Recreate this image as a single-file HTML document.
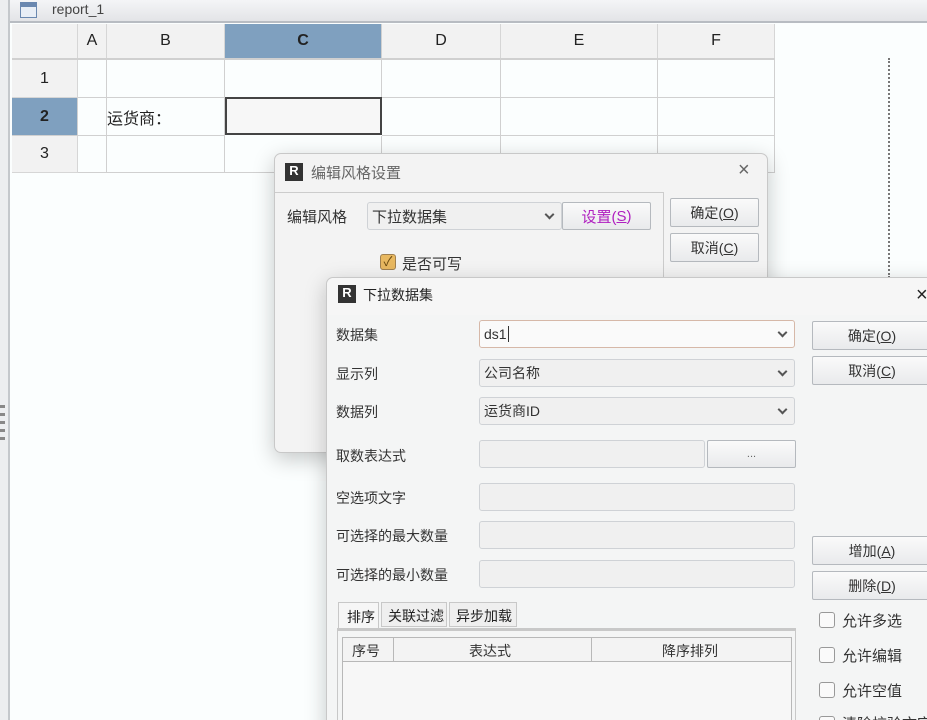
<!DOCTYPE html>
<html style="overflow:hidden;width:927px;height:720px"><head><meta charset="utf-8"><style>
*{box-sizing:border-box;margin:0;padding:0}
body{width:927px;height:720px;overflow:hidden;background:#fbfefe;font-family:"Liberation Sans","Noto Sans CJK SC",sans-serif;font-size:14px;color:#222;position:relative;white-space:nowrap}
.a{position:absolute}
.top{left:0;top:0;width:927px;height:23px;background:linear-gradient(#f4f5f7,#e3e4e7);border-bottom:2px solid #b8bcc2}
.cell{position:absolute;border-right:1px solid #d0d0d0;border-bottom:1px solid #d0d0d0;display:flex;align-items:center;justify-content:center;font-size:16px}
.hd{background:#f2f2f2;border-color:#d6d6d6}
.dlg{background:#f3f3f3;border:1px solid #c8c8c8;border-radius:7px;box-shadow:0 6px 22px rgba(0,0,0,.22)}
.btn{position:absolute;border:1px solid #b5b9be;border-radius:2px;background:linear-gradient(#fafafa,#e9eaec);display:flex;align-items:center;justify-content:center;font-size:14px;color:#333}
.in{position:absolute;border:1px solid #cfd2d6;border-radius:3px;background:#f0f0f0;font-size:14px;padding-left:4px;display:flex;align-items:center;color:#333}
.chev{position:absolute;right:8px;top:8px;width:7px;height:7px;border-right:2px solid #555;border-bottom:2px solid #555;transform:rotate(45deg)}
.lbl{position:absolute;font-size:14px;color:#333}
.cb{position:absolute;width:16px;height:16px;border:1px solid #999;border-radius:3px;background:#fafafa}
u{text-decoration:underline}
.ricon{position:absolute;width:18px;height:18px;background:#333;color:#fff;font:bold 13px/16px "Liberation Sans",sans-serif;text-align:center}
</style></head><body>
<div class="a top"></div>
<div class="a" style="left:0;top:0;width:10px;height:720px;background:#eceef0;border-right:2px solid #c4c8cc"></div>
<div class="a" style="left:0;top:405px;width:5px;height:40px;background:repeating-linear-gradient(#888 0 3px,transparent 3px 8px)"></div>
<div class="a" style="left:20px;top:2px;width:17px;height:16px;background:#e8eef6;border:1px solid #6a88b0"><div style="height:4px;background:#6a88b0"></div></div>
<div class="a" style="left:52px;top:1px;font-size:14px;color:#444">report_1</div>

<div class="cell hd" style="left:12px;top:24px;width:66px;height:35px"></div>
<div class="cell hd" style="left:78px;top:24px;width:29px;height:35px">A</div>
<div class="cell hd" style="left:107px;top:24px;width:118px;height:35px">B</div>
<div class="cell" style="left:225px;top:24px;width:157px;height:35px;background:#7fa0bf;font-weight:bold">C</div>
<div class="cell hd" style="left:382px;top:24px;width:119px;height:35px">D</div>
<div class="cell hd" style="left:501px;top:24px;width:157px;height:35px">E</div>
<div class="cell hd" style="left:658px;top:24px;width:117px;height:35px">F</div>
<div class="a" style="left:12px;top:58px;width:763px;height:2px;background:#d0d0d0"></div>

<div class="cell hd" style="left:12px;top:60px;width:66px;height:38px">1</div>
<div class="cell" style="left:12px;top:98px;width:66px;height:38px;background:#7fa0bf;font-weight:bold">2</div>
<div class="cell hd" style="left:12px;top:136px;width:66px;height:37px">3</div>
<div class="cell" style="left:78px;top:60px;width:29px;height:38px"></div><div class="cell" style="left:107px;top:60px;width:118px;height:38px"></div><div class="cell" style="left:225px;top:60px;width:157px;height:38px"></div><div class="cell" style="left:382px;top:60px;width:119px;height:38px"></div><div class="cell" style="left:501px;top:60px;width:157px;height:38px"></div><div class="cell" style="left:658px;top:60px;width:117px;height:38px"></div>
<div class="cell" style="left:78px;top:98px;width:29px;height:38px"></div><div class="cell" style="left:107px;top:98px;width:118px;height:38px;justify-content:flex-start">运货商：</div><div class="cell" style="left:382px;top:98px;width:119px;height:38px"></div><div class="cell" style="left:501px;top:98px;width:157px;height:38px"></div><div class="cell" style="left:658px;top:98px;width:117px;height:38px"></div>
<div class="a" style="left:225px;top:97px;width:157px;height:38px;border:2px solid #444;background:#f7f7f7"></div>
<div class="cell" style="left:78px;top:136px;width:29px;height:37px"></div><div class="cell" style="left:107px;top:136px;width:118px;height:37px"></div><div class="cell" style="left:225px;top:136px;width:157px;height:37px"></div><div class="cell" style="left:382px;top:136px;width:119px;height:37px"></div><div class="cell" style="left:501px;top:136px;width:157px;height:37px"></div><div class="cell" style="left:658px;top:136px;width:117px;height:37px"></div>
<div class="a" style="left:888px;top:58px;width:0;height:220px;border-left:2px dotted #777"></div>

<!-- dialog 1 -->
<div class="a dlg" style="left:274px;top:153px;width:494px;height:300px"></div>
<div class="ricon" style="left:285px;top:163px">R</div>
<div class="lbl" style="left:311px;top:162px;font-size:15px;color:#666">编辑风格设置</div>
<div class="lbl" style="left:738px;top:159px;font-size:20px;color:#666">×</div>
<div class="a" style="left:275px;top:192px;width:389px;height:260px;border-top:1px solid #ccc;border-right:1px solid #ccc"></div>
<div class="lbl" style="left:287px;top:206px;font-size:15px">编辑风格</div>
<div class="in" style="left:367px;top:202px;width:195px;height:28px;font-size:15px">下拉数据集<div class="chev"></div></div>
<div class="btn" style="left:562px;top:202px;width:89px;height:28px;color:#b020c0;font-size:15px">设置(<u>S</u>)</div>
<div class="btn" style="left:670px;top:198px;width:89px;height:29px">确定(<u>O</u>)</div>
<div class="btn" style="left:670px;top:233px;width:89px;height:29px">取消(<u>C</u>)</div>
<div class="cb" style="left:380px;top:254px;background:#e8b860;border-color:#a08050;color:#6a4a10;font-size:13px;line-height:14px;text-align:center">✓</div>
<div class="lbl" style="left:402px;top:253px;font-size:15px">是否可写</div>

<!-- dialog 2 -->
<div class="a dlg" style="left:326px;top:277px;width:620px;height:460px;background:#f4f5f5"></div>
<div class="a" style="left:327px;top:278px;width:600px;height:37px;background:#f6f6f6;border-radius:7px 0 0 0"></div>
<div class="ricon" style="left:338px;top:285px">R</div>
<div class="lbl" style="left:363px;top:285px;font-size:14px;color:#222">下拉数据集</div>
<div class="lbl" style="left:916px;top:284px;font-size:20px;color:#222">×</div>

<div class="lbl" style="left:336px;top:325px">数据集</div>
<div class="in" style="left:479px;top:320px;width:316px;height:28px;background:#fafafa;border-color:#d6b8a8">ds1<span style="border-left:1px solid #333;height:16px;margin-left:1px"></span><div class="chev"></div></div>
<div class="lbl" style="left:336px;top:364px">显示列</div>
<div class="in" style="left:479px;top:359px;width:316px;height:28px">公司名称<div class="chev"></div></div>
<div class="lbl" style="left:336px;top:402px">数据列</div>
<div class="in" style="left:479px;top:397px;width:316px;height:28px">运货商ID<div class="chev"></div></div>
<div class="lbl" style="left:336px;top:446px">取数表达式</div>
<div class="in" style="left:479px;top:440px;width:226px;height:28px"></div>
<div class="btn" style="left:707px;top:440px;width:89px;height:28px;font-size:11px;color:#666">...</div>
<div class="lbl" style="left:336px;top:488px">空选项文字</div>
<div class="in" style="left:479px;top:483px;width:316px;height:28px"></div>
<div class="lbl" style="left:336px;top:526px">可选择的最大数量</div>
<div class="in" style="left:479px;top:521px;width:316px;height:28px"></div>
<div class="lbl" style="left:336px;top:565px">可选择的最小数量</div>
<div class="in" style="left:479px;top:560px;width:316px;height:28px"></div>

<div class="a" style="left:338px;top:602px;width:41px;height:28px;border:1px solid #c8c8c8;border-bottom:none;background:#f6f6f6;padding:4px 0 0 8px;font-size:14px">排序</div>
<div class="a" style="left:381px;top:602px;width:66px;height:25px;border:1px solid #c8c8c8;background:#efefef;padding:3px 0 0 6px;font-size:14px">关联过滤</div>
<div class="a" style="left:449px;top:602px;width:68px;height:25px;border:1px solid #c8c8c8;background:#efefef;padding:3px 0 0 6px;font-size:14px">异步加载</div>
<div class="a" style="left:337px;top:628px;width:459px;height:100px;border:1px solid #c8c8c8;border-top:3px solid #c8c8c8"></div>
<div class="a" style="left:342px;top:637px;width:450px;height:90px;border:1px solid #b8b8b8;background:#f7f7f7"></div>
<div class="a" style="left:343px;top:638px;width:448px;height:24px;border-bottom:1px solid #b8b8b8;background:#f3f3f3"></div>
<div class="lbl" style="left:352px;top:641px">序号</div>
<div class="a" style="left:393px;top:638px;width:1px;height:24px;background:#b8b8b8"></div>
<div class="lbl" style="left:469px;top:641px">表达式</div>
<div class="a" style="left:591px;top:638px;width:1px;height:24px;background:#b8b8b8"></div>
<div class="lbl" style="left:662px;top:641px">降序排列</div>

<div class="btn" style="left:812px;top:321px;width:120px;height:29px">确定(<u>O</u>)</div>
<div class="btn" style="left:812px;top:356px;width:120px;height:29px">取消(<u>C</u>)</div>
<div class="btn" style="left:812px;top:536px;width:120px;height:29px">增加(<u>A</u>)</div>
<div class="btn" style="left:812px;top:571px;width:120px;height:29px">删除(<u>D</u>)</div>
<div class="cb" style="left:819px;top:612px"></div><div class="lbl" style="left:842px;top:610px;font-size:15px">允许多选</div>
<div class="cb" style="left:819px;top:647px"></div><div class="lbl" style="left:842px;top:645px;font-size:15px">允许编辑</div>
<div class="cb" style="left:819px;top:682px"></div><div class="lbl" style="left:842px;top:680px;font-size:15px">允许空值</div>
<div class="cb" style="left:819px;top:716px"></div><div class="lbl" style="left:842px;top:713px;font-size:15px">清除校验文字</div>
</body></html>
